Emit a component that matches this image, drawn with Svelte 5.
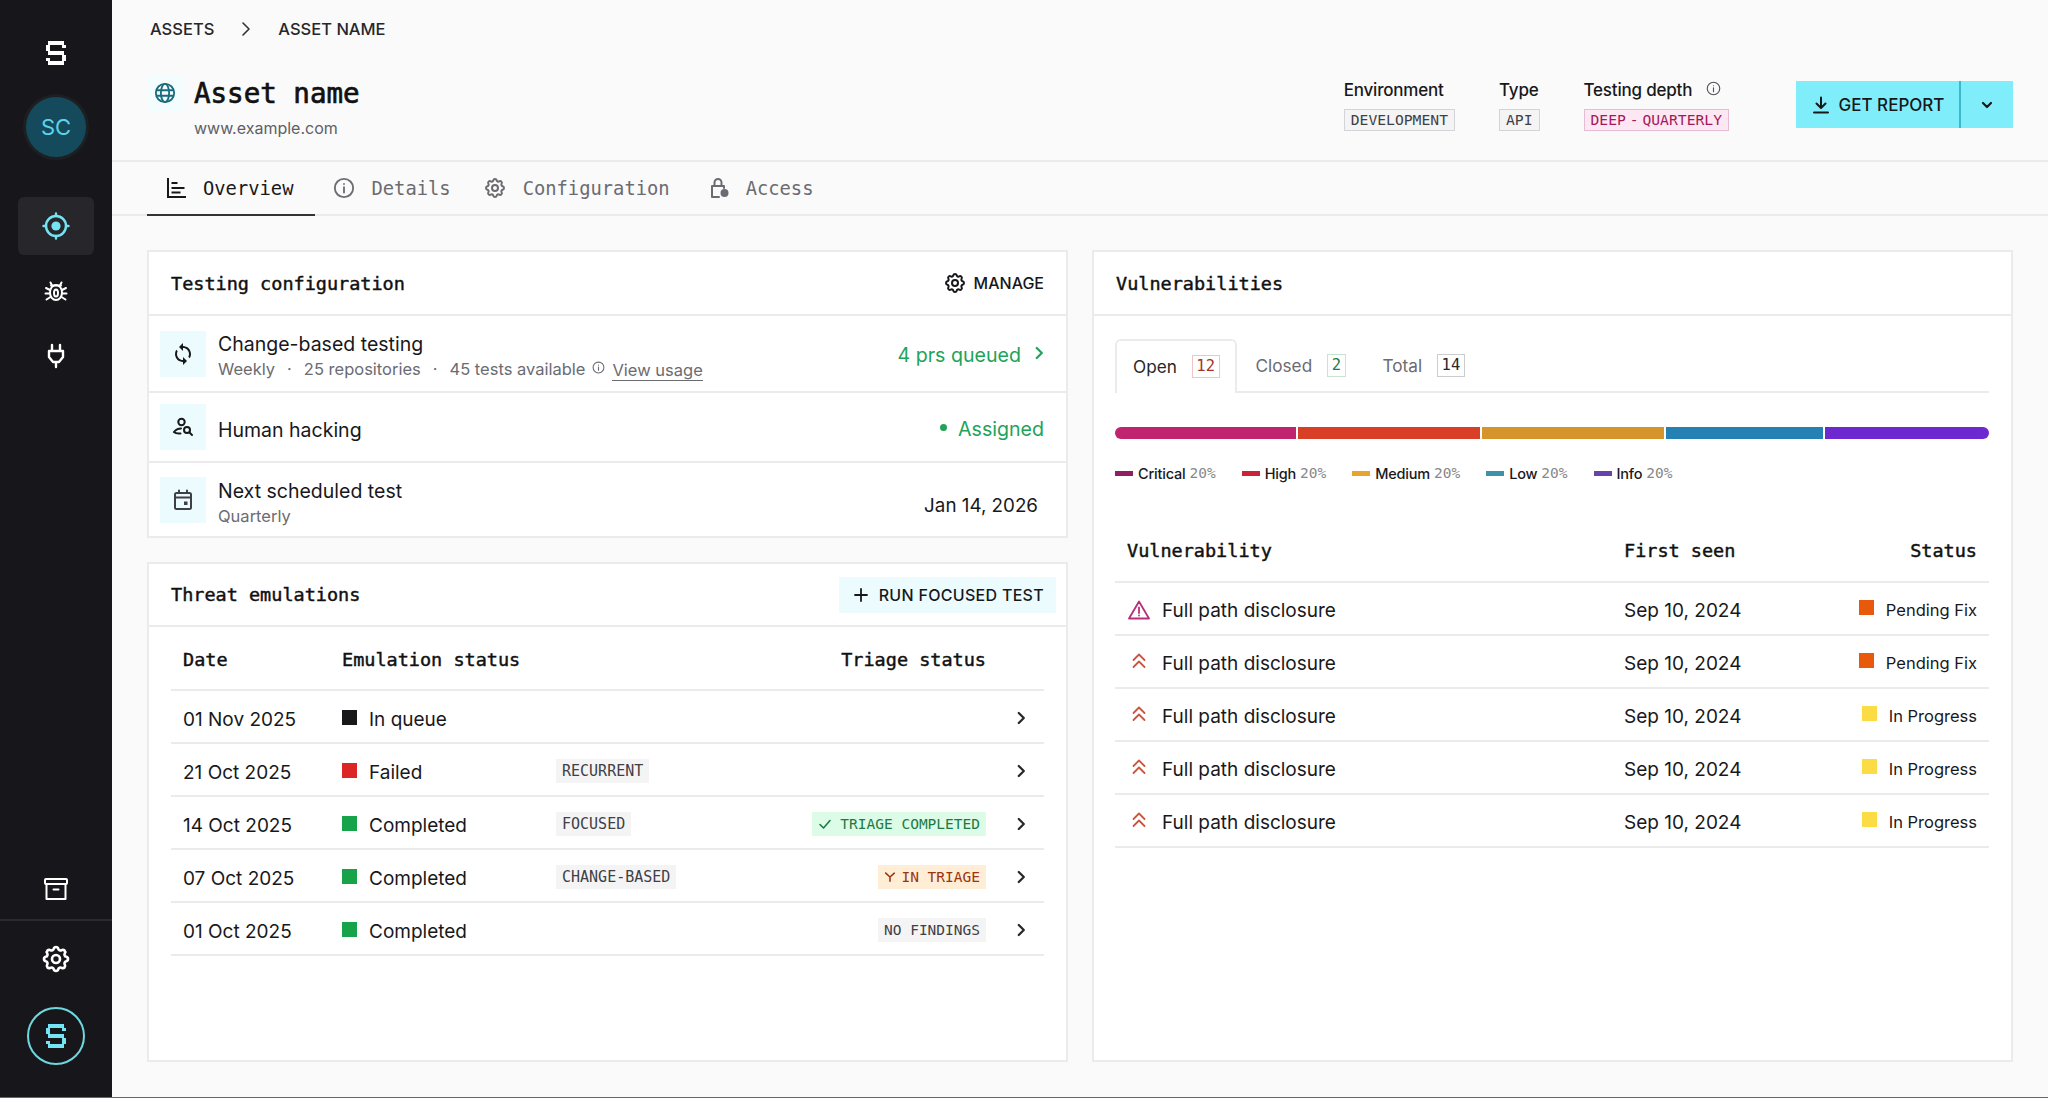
<script>
  const gear = 'M10.325 4.317c.426 -1.756 2.924 -1.756 3.35 0a1.724 1.724 0 0 0 2.573 1.066c1.543 -.94 3.31 .826 2.37 2.37a1.724 1.724 0 0 0 1.065 2.572c1.756 .426 1.756 2.924 0 3.35a1.724 1.724 0 0 0 -1.066 2.573c.94 1.543 -.826 3.31 -2.37 2.37a1.724 1.724 0 0 0 -2.572 1.065c-.426 1.756 -2.924 1.756 -3.35 0a1.724 1.724 0 0 0 -2.573 -1.066c-1.543 .94 -3.31 -.826 -2.37 -2.37a1.724 1.724 0 0 0 -1.065 -2.572c-1.756 -.426 -1.756 -2.924 0 -3.35a1.724 1.724 0 0 0 1.066 -2.573c-.94 -1.543 .826 -3.31 2.37 -2.37c1 .608 2.296 .07 2.572 -1.065z';

  const emulations = [
    { date: '01 Nov 2025', status: 'In queue', color: '#18181b', tag: '', triage: '', kind: '' },
    { date: '21 Oct 2025', status: 'Failed', color: '#dc2626', tag: 'RECURRENT', triage: '', kind: '' },
    { date: '14 Oct 2025', status: 'Completed', color: '#16a34a', tag: 'FOCUSED', triage: 'TRIAGE COMPLETED', kind: 'done' },
    { date: '07 Oct 2025', status: 'Completed', color: '#16a34a', tag: 'CHANGE-BASED', triage: 'IN TRIAGE', kind: 'progress' },
    { date: '01 Oct 2025', status: 'Completed', color: '#16a34a', tag: '', triage: 'NO FINDINGS', kind: 'none' }
  ];

  const segments = [
    { width: 182, color: '#c0246e' },
    { width: 182, color: '#d93f26' },
    { width: 183, color: '#d6952a' },
    { width: 157, color: '#2581b4' },
    { width: 165, color: '#6d28d0' }
  ];

  const legend = [
    { label: 'Critical', color: '#8f1f63' },
    { label: 'High', color: '#c9223a' },
    { label: 'Medium', color: '#e8a52e' },
    { label: 'Low', color: '#3e93a8' },
    { label: 'Info', color: '#6643a8' }
  ];

  const vulns = [
    { critical: true, status: 'Pending Fix', color: '#e8590c' },
    { critical: false, status: 'Pending Fix', color: '#e8590c' },
    { critical: false, status: 'In Progress', color: '#fcdc45' },
    { critical: false, status: 'In Progress', color: '#fcdc45' },
    { critical: false, status: 'In Progress', color: '#fcdc45' }
  ];
</script>

{#snippet logo(size)}
  <svg width={size} height={size * 1.2} viewBox="0 0 20 24" fill="currentColor">
    <rect x="2" y="0" width="16" height="4" />
    <rect x="0" y="4" width="4" height="6" />
    <rect x="16" y="4" width="4" height="3" />
    <rect x="2" y="10" width="16" height="4" />
    <rect x="16" y="14" width="4" height="6" />
    <rect x="0" y="17" width="4" height="3" />
    <rect x="2" y="20" width="16" height="4" />
  </svg>
{/snippet}

{#snippet gearIcon(size, sw)}
  <svg width={size} height={size} viewBox="0 0 24 24" fill="none" stroke="currentColor" stroke-width={sw} stroke-linecap="round" stroke-linejoin="round">
    <path d={gear} /><circle cx="12" cy="12" r="3" />
  </svg>
{/snippet}

{#snippet infoIcon(size, sw)}
  <svg width={size} height={size} viewBox="0 0 24 24" fill="none" stroke="currentColor" stroke-width={sw} stroke-linecap="round">
    <circle cx="12" cy="12" r="10" /><path d="M12 11v6M12 7.5v.1" />
  </svg>
{/snippet}

{#snippet chevron(size)}
  <svg width={size} height={size} viewBox="0 0 16 16" fill="none" stroke="currentColor" stroke-width="2" stroke-linecap="round" stroke-linejoin="round">
    <path d="M6 3.5 10.5 8 6 12.5" />
  </svg>
{/snippet}

<div class="app">
  <aside class="sidebar">
    <div class="logo">{@render logo(20)}</div>
    <div class="avatar">SC</div>
    <nav class="nav">
      <div class="nav-item active">
        <svg width="28" height="28" viewBox="0 0 28 28" fill="none" stroke="currentColor" stroke-width="2.4" stroke-linecap="round">
          <circle cx="14" cy="14" r="10" /><circle cx="14" cy="14" r="4.6" fill="currentColor" stroke="none" />
          <path d="M14 1.5v2.5M14 24v2.5M1.5 14H4M24 14h2.5" />
        </svg>
      </div>
      <div class="nav-item">
        <svg width="24" height="24" viewBox="0 0 24 24" fill="none" stroke="currentColor" stroke-width="2" stroke-linecap="round" stroke-linejoin="round">
          <ellipse cx="12" cy="13.5" rx="6" ry="7.5" />
          <path d="M8 6.5 6.5 3.5M16 6.5l1.500-3M7 6.500h10M6 11 2 9M6 14.500H1.500M6.500 18 2.500 20.500M18 11l4-2M18 14.500h4.500M17.500 18l4 2.500" />
          <ellipse cx="12" cy="14" rx="2" ry="3.600" />
        </svg>
      </div>
      <div class="nav-item">
        <svg width="22" height="26" viewBox="0 0 22 26" fill="none" stroke="currentColor" stroke-width="2.400" stroke-linecap="round" stroke-linejoin="round">
          <path d="M7 2v6M15 2v6M4 8h14v6l-4 5h-6l-4-5zM11 19v5" />
        </svg>
      </div>
    </nav>
    <div class="nav-bottom">
      <div class="archive">
        <svg width="26" height="26" viewBox="0 0 26 26" fill="none" stroke="currentColor" stroke-width="2" stroke-linejoin="round" stroke-linecap="round">
          <rect x="2" y="3" width="22" height="5" rx="1" /><path d="M3.500 8v15h19V8M10.500 13.500h5" />
        </svg>
      </div>
      <div class="settings">{@render gearIcon(32, 2)}</div>
      <div class="logo-ring">{@render logo(20)}</div>
    </div>
  </aside>

  <main class="main">
    <header class="header">
      <div class="crumbs">
        <span>ASSETS</span>
        <svg width="16" height="16" viewBox="0 0 16 16" fill="none" stroke="#333" stroke-width="1.600" stroke-linecap="round" stroke-linejoin="round"><path d="M5 2l6 6-6 6" /></svg>
        <span>ASSET NAME</span>
      </div>
      <div class="head-row">
        <div class="globe">
          <svg width="22" height="22" viewBox="0 0 24 24" fill="none" stroke="#1a6b7e" stroke-width="2">
            <circle cx="12" cy="12" r="10" /><ellipse cx="12" cy="12" rx="4.500" ry="10" /><path d="M2.500 9h19M2.500 15h19" />
          </svg>
        </div>
        <div class="head-title">
          <h1>Asset name</h1>
          <div class="url">www.example.com</div>
        </div>
        <div class="meta">
          <div class="meta-col">
            <div class="meta-label">Environment</div>
            <span class="meta-tag">DEVELOPMENT</span>
          </div>
          <div class="meta-col">
            <div class="meta-label">Type</div>
            <span class="meta-tag">API</span>
          </div>
          <div class="meta-col">
            <div class="meta-label">Testing depth <span class="meta-info">{@render infoIcon(15, 1.800)}</span></div>
            <span class="meta-tag pink">DEEP - QUARTERLY</span>
          </div>
        </div>
        <div class="report">
          <button class="report-main">
            <svg width="20" height="20" viewBox="0 0 20 20" fill="none" stroke="currentColor" stroke-width="2" stroke-linecap="round" stroke-linejoin="round"><path d="M10 2.500v10M5.500 8.500l4.500 4.500 4.500-4.500M3 17.500h14" /></svg>
            GET REPORT
          </button>
          <button class="report-more">
            <svg width="16" height="16" viewBox="0 0 16 16" fill="none" stroke="currentColor" stroke-width="2.200" stroke-linecap="round" stroke-linejoin="round"><path d="M4 6l4 4 4-4" /></svg>
          </button>
        </div>
      </div>
    </header>

    <div class="tabs">
      <div class="tab active">
        <svg width="22" height="22" viewBox="0 0 22 22" fill="none" stroke="currentColor" stroke-width="2" stroke-linecap="square"><path d="M3 2v18h17M7.500 6h4M7.500 11h11M7.500 15.500h7" /></svg>
        Overview
      </div>
      <div class="tab">{@render infoIcon(22, 2)} Details</div>
      <div class="tab tab-config">{@render gearIcon(24, 2)} Configuration</div>
      <div class="tab tab-access">
        <svg width="22" height="22" viewBox="0 0 22 22" fill="none" stroke="currentColor" stroke-width="2" stroke-linecap="round" stroke-linejoin="round">
          <path d="M11 20H4V9h12v2M6.500 9V5.500a3.500 3.500 0 0 1 7 0V9" /><circle cx="16.500" cy="16" r="4" fill="currentColor" stroke="none" />
        </svg>
        Access
      </div>
    </div>

    <div class="content">
      <div class="left">
        <section class="card config">
          <div class="card-head">
            <h2>Testing configuration</h2>
            <div class="manage">{@render gearIcon(24, 2)} MANAGE</div>
          </div>
          <div class="row r1">
            <div class="row-icon">
              <svg width="24" height="24" viewBox="0 0 24 24" fill="#18181b"><path d="M12 4V1L8 5l4 4V6c3.310 0 6 2.690 6 6 0 1.010-.25 1.970-.7 2.800l1.460 1.460C19.540 15.030 20 13.570 20 12c0-4.420-3.580-8-8-8zm0 14c-3.310 0-6-2.690-6-6 0-1.010.25-1.970.7-2.800L5.240 7.740C4.460 8.970 4 10.430 4 12c0 4.420 3.580 8 8 8v3l4-4-4-4v3z" /></svg>
            </div>
            <div class="row-text">
              <div class="row-title">Change-based testing</div>
              <div class="row-sub">
                <span>Weekly</span><i>·</i><span>25 repositories</span><i>·</i><span>45 tests available</span>
                <span class="sub-info">{@render infoIcon(13, 2)}</span>
                <span class="usage">View usage</span>
              </div>
            </div>
            <div class="row-end green">4 prs queued <span class="end-chev">{@render chevron(18)}</span></div>
          </div>
          <div class="row r2">
            <div class="row-icon">
              <svg width="22" height="22" viewBox="0 0 22 22" fill="none" stroke="#18181b" stroke-width="2" stroke-linecap="round"><circle cx="9.500" cy="6" r="3.200" /><path d="M9 12.500c-3 0-5.500 1.500-7 3.500 2 2 4.500 1.500 6.500 1.500" /><circle cx="15" cy="14" r="3" /><path d="M17.500 16.500 20 19" /></svg>
            </div>
            <div class="row-text"><div class="row-title">Human hacking</div></div>
            <div class="row-end green"><span class="dot"></span>Assigned</div>
          </div>
          <div class="row r3">
            <div class="row-icon">
              <svg width="22" height="22" viewBox="0 0 22 22" fill="none" stroke="#3f3f46" stroke-width="2" stroke-linecap="round"><rect x="3" y="4" width="16" height="16" rx="1.500" /><path d="M3 8.500h16M7 1.500V4M15 1.500V4" /><rect x="12" y="12.500" width="3.500" height="3.500" fill="#3f3f46" stroke="none" /></svg>
            </div>
            <div class="row-text">
              <div class="row-title">Next scheduled test</div>
              <div class="row-sub">Quarterly</div>
            </div>
            <div class="row-end date">Jan 14, 2026</div>
          </div>
        </section>

        <section class="card threats">
          <div class="card-head">
            <h2>Threat emulations</h2>
            <button class="run">
              <svg width="16" height="16" viewBox="0 0 16 16" fill="none" stroke="currentColor" stroke-width="1.800" stroke-linecap="round"><path d="M8 2v12M2 8h12" /></svg>
              RUN FOCUSED TEST
            </button>
          </div>
          <div class="table">
            <div class="em-row em-head">
              <div>Date</div><div>Emulation status</div><div></div><div>Triage status</div><div></div>
            </div>
            {#each emulations as e}
              <div class="em-row">
                <div>{e.date}</div>
                <div class="status"><span class="square" style:background={e.color}></span>{e.status}</div>
                <div class="tag-cell">{#if e.tag}<span class="tag kind-tag">{e.tag}</span>{/if}</div>
                <div class="tag-cell">
                  {#if e.triage}
                    <span class="tag {e.kind}">
                      {#if e.kind === 'done'}
                        <svg width="14" height="14" viewBox="0 0 14 14" fill="none" stroke="currentColor" stroke-width="1.600" stroke-linecap="round" stroke-linejoin="round"><path d="M2 7.500 5.500 11 12 3.500" /></svg>
                      {:else if e.kind === 'progress'}
                        <svg width="12" height="12" viewBox="0 0 14 14" fill="none" stroke="currentColor" stroke-width="1.800" stroke-linecap="round" stroke-linejoin="round"><path d="M2 2.500 7 7v5M12 2.500 7 7M2 2.500v.1" /></svg>
                      {/if}
                      {e.triage}
                    </span>
                  {/if}
                </div>
                <div class="em-chev">{@render chevron(18)}</div>
              </div>
            {/each}
          </div>
        </section>
      </div>

      <section class="card vulns">
        <div class="card-head"><h2>Vulnerabilities</h2></div>
        <div class="vuln-body">
          <div class="vuln-tabs">
            <div class="vtab active">Open <span class="count red">12</span></div>
            <div class="vtab">Closed <span class="count grn">2</span></div>
            <div class="vtab">Total <span class="count">14</span></div>
          </div>
          <div class="bar">
            {#each segments as s}
              <span style:flex-grow={s.width} style:background={s.color}></span>
            {/each}
          </div>
          <div class="legend">
            {#each legend as l}
              <div class="legend-item">
                <span class="swatch" style:background={l.color}></span>
                <b>{l.label}</b> <em>20%</em>
              </div>
            {/each}
          </div>
          <div class="v-row v-head"><div>Vulnerability</div><div>First seen</div><div>Status</div></div>
          {#each vulns as v}
            <div class="v-row">
              <div class="v-name">
                <span class="v-icon">
                  {#if v.critical}
                    <svg width="22" height="20" viewBox="0 0 22 20" fill="none" stroke="#b5307a" stroke-width="1.800" stroke-linejoin="round" stroke-linecap="round"><path d="M11 1.500 1 18.500h20zM11 7.500v5.500M11 15.500v.1" /></svg>
                  {:else}
                    <svg class="up" width="14" height="16" viewBox="0 0 14 16" fill="none" stroke="#c9563f" stroke-width="1.800" stroke-linecap="round" stroke-linejoin="round"><path d="M1.500 7 7 1.500 12.500 7M1.500 14 7 8.500l5.500 5.500" /></svg>
                  {/if}
                </span>
                Full path disclosure
              </div>
              <div>Sep 10, 2024</div>
              <div class="v-status"><span class="square" style:background={v.color}></span>{v.status}</div>
            </div>
          {/each}
        </div>
      </section>
    </div>
  </main>
</div>

<style>
  :global(body) {
    background: #666;
  }

  .app {
    display: flex;
    height: 1097px;
    font-family: Inter, "Liberation Sans", sans-serif;
    color: #18181b;
  }

  .sidebar {
    width: 112px;
    flex: none;
    background: #17171b;
    color: #fff;
    display: flex;
    flex-direction: column;
    align-items: center;
  }

  .logo {
    margin-top: 41px;
    height: 24px;
    display: flex;
  }

  .avatar {
    margin-top: 32px;
    width: 60px;
    height: 60px;
    border-radius: 50%;
    background: #154a5c;
    color: #5fd3e6;
    font-size: 22px;
    display: flex;
    align-items: center;
    justify-content: center;
    box-shadow: 0 0 0 3px #1c2023;
  }

  .nav {
    margin-top: 40px;
    display: flex;
    flex-direction: column;
    gap: 7px;
  }

  .nav-item {
    width: 76px;
    height: 58px;
    border-radius: 6px;
    display: flex;
    align-items: center;
    justify-content: center;
  }

  .nav-item.active {
    background: #26262b;
    color: #74e4f5;
  }

  .nav-bottom {
    margin-top: auto;
    width: 100%;
    display: flex;
    flex-direction: column;
    align-items: center;
  }

  .archive {
    width: 100%;
    height: 26px;
    display: flex;
    justify-content: center;
    border-bottom: 2px solid #2a2a2f;
    padding-bottom: 17px;
  }

  .settings {
    margin-top: 22px;
    height: 32px;
  }

  .logo-ring {
    margin: 32px 0 32px;
    width: 58px;
    height: 58px;
    border: 2px solid #6fd8de;
    border-radius: 50%;
    color: #74e4f5;
    display: flex;
    align-items: center;
    justify-content: center;
    box-sizing: border-box;
  }

  .main {
    flex: 1;
    min-width: 0;
    background: #fafafa;
    display: flex;
    flex-direction: column;
  }

  .header {
    height: 160px;
    padding: 0 35px;
    border-bottom: 2px solid #ebebeb;
  }

  .crumbs {
    height: 58px;
    padding-left: 3px;
    display: flex;
    align-items: center;
    gap: 24px;
    font-size: 16.5px;
    font-weight: 500;
    color: #27272a;
  }

  .head-row {
    display: flex;
    align-items: flex-start;
  }

  .globe {
    width: 36px;
    height: 36px;
    margin-top: 17px;
    background: #f3fdfe;
    display: flex;
    align-items: center;
    justify-content: center;
  }

  .head-title {
    margin-left: 11px;
    margin-top: 14px;
  }

  h1 {
    margin: 0;
    font-family: "DejaVu Sans Mono", monospace;
    font-size: 27.5px;
    line-height: 42px;
    font-weight: 500;
    color: #111;
    -webkit-text-stroke: 0.7px #111;
  }

  .url {
    font-size: 16px;
    line-height: 24px;
    margin-top: 2px;
    color: #5f5f66;
  }

  .meta {
    margin-left: auto;
    margin-top: 21px;
    display: flex;
    gap: 44px;
  }

  .meta-col {
    display: flex;
    flex-direction: column;
    align-items: flex-start;
    gap: 8px;
  }

  .meta-label {
    font-size: 17px;
    font-weight: 500;
    line-height: 22px;
    display: flex;
    align-items: center;
    gap: 14px;
    letter-spacing: -0.2px;
  }

  .meta-info {
    display: flex;
    color: #52525b;
    margin-top: -4px;
  }

  .meta-tag {
    font-family: "DejaVu Sans Mono", monospace;
    font-size: 14.7px;
    line-height: 20px;
    padding: 0 6px;
    border: 1.5px solid #d4d4d8;
    background: #f4f4f5;
    color: #3f3f46;
  }

  .meta-tag.pink {
    background: #fde7f3;
    border-color: #e5bcd2;
    color: #a3195b;
    word-spacing: -5px;
  }

  .report {
    margin-left: 67px;
    margin-top: 23px;
    display: flex;
    height: 47px;
  }

  .report button {
    border: 0;
    background: #80edfb;
    color: #18181b;
    font-family: inherit;
    display: flex;
    align-items: center;
    justify-content: center;
  }

  .report-main {
    width: 165px;
    gap: 8px;
    font-size: 17px;
    font-weight: 500;
    border-right: 2px solid #3bb8cb !important;
  }

  .report-more {
    width: 52px;
  }

  .tabs {
    padding: 0 35px;
    height: 52px;
    display: flex;
    border-bottom: 2px solid #ebebeb;
  }

  .tab {
    height: 52px;
    padding: 0 18px;
    display: flex;
    align-items: center;
    gap: 16px;
    font-family: "DejaVu Sans Mono", monospace;
    font-size: 18.8px;
    color: #6b6b72;
    box-sizing: border-box;
  }

  .tab.active {
    color: #18181b;
    border-bottom: 2px solid #333;
    height: 54px;
    padding-right: 22px;
  }

  .tab-config {
    margin-left: -4px;
  }

  .tab-access {
    margin-left: 2px;
  }

  .content {
    flex: 1;
    min-height: 0;
    padding: 34px 35px 35px;
    display: grid;
    grid-template-columns: 1fr 1fr;
    gap: 24px;
  }

  .left {
    display: flex;
    flex-direction: column;
    gap: 24px;
    min-height: 0;
  }

  .card {
    background: #fff;
    border: 2px solid #ebebeb;
    box-sizing: border-box;
  }

  .threats {
    flex: 1;
  }

  .card-head {
    height: 62px;
    padding: 0 22px;
    border-bottom: 2px solid #ebebeb;
    display: flex;
    align-items: center;
    justify-content: space-between;
  }

  .threats .card-head {
    height: 61px;
  }

  h2 {
    margin: 0;
    font-family: "DejaVu Sans Mono", monospace;
    font-size: 18.5px;
    font-weight: 500;
    color: #111;
    -webkit-text-stroke: 0.45px #111;
  }

  .manage {
    display: flex;
    align-items: center;
    gap: 7px;
    font-size: 16px;
    font-weight: 500;
  }

  .row {
    display: flex;
    align-items: center;
    padding: 0 22px 0 11px;
  }

  .r1 { height: 75px; border-bottom: 2px solid #ebebeb; }
  .r2 { height: 68px; border-bottom: 2px solid #ebebeb; }
  .r3 { height: 73px; }

  .row-icon {
    width: 46px;
    height: 46px;
    flex: none;
    background: #ecfcfe;
    display: flex;
    align-items: center;
    justify-content: center;
  }

  .row-text {
    margin-left: 12px;
    margin-top: 5px;
    flex: 1;
  }

  .r3 .row-text {
    margin-top: 8px;
  }

  .row-title {
    font-size: 19.5px;
    line-height: 26px;
  }

  .row-sub {
    font-size: 16.5px;
    line-height: 25px;
    color: #6b6b72;
    display: flex;
    align-items: center;
  }

  .row-sub i {
    font-style: normal;
    margin: 0 12px;
  }

  .sub-info {
    display: flex;
    margin: -4px 7px 0 7px;
  }

  .usage {
    border-bottom: 1.5px solid #6b6b72;
    line-height: 20px;
    margin-top: 2px;
  }

  .row-end {
    font-size: 19.6px;
    margin-top: 3px;
    display: flex;
    align-items: center;
  }

  .green {
    color: #22a35a;
  }

  .end-chev {
    margin-left: 9px;
    margin-right: -4px;
    display: flex;
    margin-top: -4px;
  }

  .dot {
    width: 7px;
    height: 7px;
    border-radius: 50%;
    background: #22a35a;
    margin-right: 11px;
    margin-top: -2px;
  }

  .date {
    margin-right: 6px;
    margin-top: 11px;
    font-size: 18.8px;
  }

  .table {
    margin: 0 22px;
  }

  .em-row {
    height: 53px;
    box-sizing: border-box;
    padding-top: 6px;
    display: grid;
    grid-template-columns: 159px 214px 1fr auto 58px;
    align-items: center;
    padding-left: 12px;
    border-bottom: 2px solid #ebebeb;
    font-size: 19px;
  }

  .em-head {
    height: 64px;
    padding-top: 2px;
    font-family: "DejaVu Sans Mono", monospace;
    font-size: 18.5px;
    font-weight: 500;
    color: #111;
    -webkit-text-stroke: 0.45px #111;
  }

  .status {
    display: flex;
    align-items: center;
    gap: 12px;
  }

  .square {
    width: 15px;
    height: 15px;
    flex: none;
    margin-top: -5px;
  }

  .tag-cell {
    margin-top: -3px;
    display: flex;
  }

  .tag {
    display: inline-flex;
    align-items: center;
    gap: 8px;
    height: 24px;
    padding: 0 6px;
    background: #f4f4f5;
    color: #3f3f46;
    font-family: "DejaVu Sans Mono", monospace;
    font-size: 14.5px;
  }

  .kind-tag {
    font-size: 15px;
  }

  .tag.done {
    background: #dcfce7;
    color: #1d7a45;
  }

  .tag.progress {
    background: #ffedd5;
    color: #9a3412;
    gap: 5px;
  }

  .em-chev {
    display: flex;
    padding-left: 26px;
    margin-top: -3px;
    color: #27272a;
  }

  .run {
    border: 0;
    margin-right: -12px;
    height: 36px;
    padding: 0 12px 0 14px;
    background: #ecfcfe;
    color: #18181b;
    display: flex;
    align-items: center;
    gap: 10px;
    font-family: inherit;
    font-size: 16px;
    font-weight: 500;
    letter-spacing: 0.3px;
  }

  .vuln-body {
    padding: 23px 22px 0 21px;
  }

  .vuln-tabs {
    display: flex;
    height: 52px;
    border-bottom: 2px solid #ebebeb;
  }

  .vtab {
    display: flex;
    align-items: center;
    gap: 15px;
    padding: 0 18px 0 19px;
    font-size: 17.2px;
    color: #6b6b72;
    height: 52px;
    box-sizing: border-box;
  }

  .vtab.active {
    height: 54px;
    padding: 0 15px 2px 16px;
    color: #27272a;
    background: #fff;
    border: 2px solid #ebebeb;
    border-bottom: 0;
    border-radius: 6px 6px 0 0;
  }

  .count {
    font-family: "DejaVu Sans Mono", monospace;
    font-size: 15.5px;
    line-height: 21px;
    padding: 0 3.5px;
    border: 1.5px solid #ccc;
    color: #27272a;
  }

  .count.red {
    border-color: #ecc8c4;
    color: #a5322a;
  }

  .count.grn {
    border-color: #c7e4d2;
    color: #1d7a45;
  }

  .bar {
    margin-top: 34px;
    height: 12px;
    display: flex;
    gap: 2px;
    border-radius: 6px;
    overflow: hidden;
  }

  .bar span {
    flex-basis: 0;
  }

  .legend {
    margin-top: 23px;
    display: flex;
    gap: 26px;
    height: 22px;
    align-items: center;
  }

  .legend-item {
    display: flex;
    align-items: center;
    font-size: 14.5px;
  }

  .swatch {
    width: 18px;
    height: 5px;
    margin-right: 5px;
  }

  .legend-item b {
    font-weight: 500;
    margin-right: 4px;
    letter-spacing: -0.2px;
  }

  .legend-item em {
    font-style: normal;
    font-family: "DejaVu Sans Mono", monospace;
    font-size: 14.5px;
    color: #888;
  }

  .v-row {
    height: 53px;
    box-sizing: border-box;
    padding: 3px 12px 0;
    display: grid;
    grid-template-columns: 497px 1fr auto;
    align-items: center;
    border-bottom: 2px solid #ebebeb;
    font-size: 19px;
  }

  .v-head {
    height: 71px;
    margin-top: 28px;
    padding: 8px 12px 0;
    font-family: "DejaVu Sans Mono", monospace;
    font-size: 18.5px;
    font-weight: 500;
    color: #111;
    -webkit-text-stroke: 0.45px #111;
  }

  .v-name {
    display: flex;
    align-items: center;
  }

  .v-icon {
    width: 24px;
    margin-right: 11px;
    display: flex;
    justify-content: center;
  }

  .up {
    margin-top: -4px;
  }

  .v-status {
    display: flex;
    align-items: center;
    gap: 12px;
    font-size: 16.5px;
  }
</style>
